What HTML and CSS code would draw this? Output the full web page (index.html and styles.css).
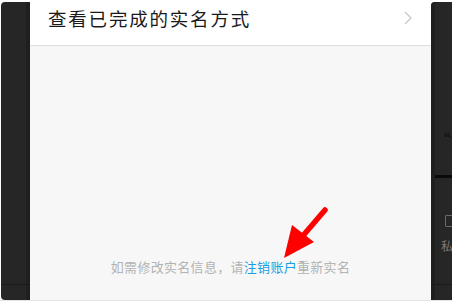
FILE: index.html
```html
<!DOCTYPE html>
<html>
<head>
<meta charset="utf-8">
<link rel="stylesheet" href="styles.css">
</head>
<body>
<div class="screen">
  <div class="side left">
    <div class="side-fill"></div>
    <div class="side-foot"></div>
  </div>
  <div class="main">
    <div class="row">
      <span class="row-title">查看已完成的实名方式</span>
      <svg class="chev" width="8" height="14" viewBox="0 0 8 14"><path d="M1 1 L7 7 L1 13" fill="none" stroke="#c8c8c8" stroke-width="1.3"/></svg>
    </div>
    <div class="body">
      <p class="note">如需修改实名信息，请<span class="link">注销账户</span>重新实名</p>
    </div>
    <svg class="arrow" width="60" height="70" viewBox="0 0 60 70">
      <line x1="52" y1="12" x2="28" y2="40" stroke="#ff0000" stroke-width="5.5" stroke-linecap="round"/>
      <polygon points="11,60 19,27 41,44" fill="#ff0000"/>
    </svg>
  </div>
  <div class="side right">
    <div class="r-quote">“设</div>
    <div class="r-bar"></div>
    <div class="r-icon"></div>
    <div class="r-priv">私</div>
    <div class="r-rest"></div>
  </div>
</div>
</body>
</html>
```
FILE: styles.css
```css
html, body {
  margin: 0;
  padding: 0;
  background: #ffffff;
}
body {
  width: 452px;
  height: 302px;
  overflow: hidden;
  font-family: "Noto Sans CJK SC", "Noto Sans", sans-serif;
}
.screen {
  display: flex;
  height: 300px;
  border-bottom: 1px solid #e6e6e6;
}
.side {
  background: #262626;
  display: flex;
  flex-direction: column;
}
.left {
  width: 29px;
  margin-left: 1px;
  margin-top: 2px;
  border-radius: 4px 0 0 4px;
  box-shadow: inset -4px 0 0 #1f1f1f;
}
.side-fill {
  flex: 1;
}
.side-foot {
  height: 15px;
  border-top: 1px solid #1a1a1a;
}
.main {
  position: relative;
  width: 401px;
  display: flex;
  flex-direction: column;
  background: #f7f7f7;
}
.row {
  height: 45px;
  background: #ffffff;
  border-bottom: 1px solid #dedede;
  display: flex;
  align-items: center;
  justify-content: space-between;
  padding: 0 19px 0 18px;
  box-sizing: content-box;
  margin-top: -7px;
  padding-top: 7px;
}
.row-title {
  font-size: 18.5px;
  color: #1a1a1a;
  letter-spacing: 1.8px;
  margin-top: -10px;
}
.chev {
  margin-top: -9px;
}
.body {
  flex: 1;
  display: flex;
  flex-direction: column;
  justify-content: flex-end;
  align-items: center;
}
.note {
  margin: 0 0 24px 0;
  font-size: 13px;
  letter-spacing: 0.3px;
  color: #b3b3b3;
  line-height: 18px;
}
.link {
  color: #1b9ee0;
}
.arrow {
  position: absolute;
  left: 243px;
  top: 198px;
}
.right {
  width: 21px;
  margin-top: 2px;
  border-radius: 4px 0 0 0;
  box-shadow: inset 4px 0 0 #1f1f1f;
  overflow: hidden;
}
.r-quote {
  margin-top: 128px;
  padding-left: 4px;
  font-size: 15px;
  line-height: 18px;
  color: #0d0d0d;
  white-space: nowrap;
}
.r-bar {
  margin-top: 27px;
  margin-left: 4px;
  height: 3px;
  background: #0a0a0a;
}
.r-icon {
  margin-top: 37px;
  margin-left: 14px;
  width: 12px;
  height: 10px;
  border: 1px solid #6a6a6a;
  border-radius: 1px;
}
.r-priv {
  margin-top: 12px;
  padding-left: 10px;
  font-size: 12px;
  line-height: 14px;
  color: #7a7a7a;
}
.r-rest {
  flex: 1;
  border-bottom: 1px solid #1a1a1a;
  margin-bottom: 15px;
}
```
